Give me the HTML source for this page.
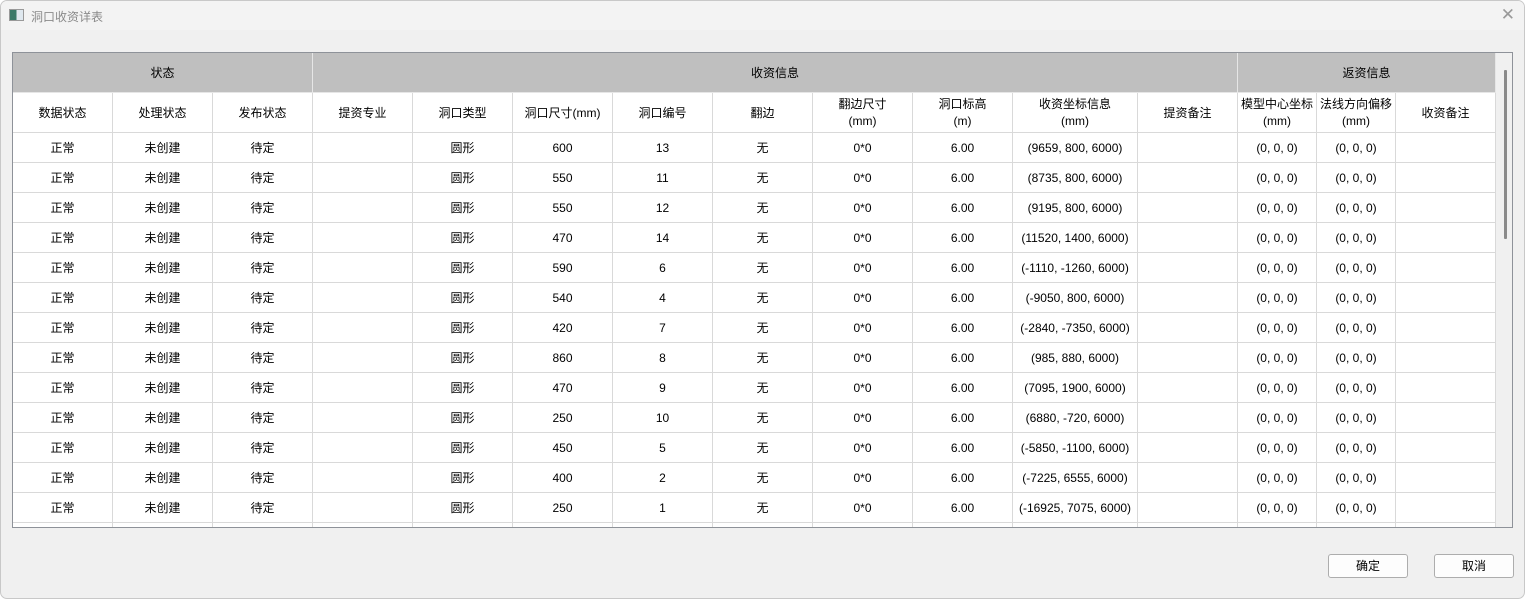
<!DOCTYPE html>
<html><head><meta charset="utf-8"><style>
*{margin:0;padding:0;box-sizing:border-box}
body{width:1526px;height:600px;background:#fff;font-family:"Liberation Sans","Noto Sans CJK SC",sans-serif;font-size:12px;color:#000;overflow:hidden;position:relative}
.win{position:absolute;left:0;top:0;width:1525px;height:599px;background:#f0f0f0;border:1px solid #c8c8c8;border-radius:7px;overflow:hidden}
.title{position:absolute;left:0;top:0;width:100%;height:29px;background:#f3f3f3}
.title span{position:absolute;left:30px;top:7px;color:#8a8a8a;font-size:12px}
.ico{position:absolute;left:8px;top:8px;width:15px;height:12px;border:1px solid #999;background:linear-gradient(90deg,#3a7a6a 0 50%,#dfe8ef 50%)}
.close{position:absolute;right:9px;top:4px;color:#999;font-size:17px}
.frame{position:absolute;left:11px;top:51px;width:1501px;height:476px;border:1px solid #8e9299;background:#fff;overflow:hidden}
table{border-collapse:collapse;table-layout:fixed;position:absolute;left:-1px;top:-1px}
td{border:1px solid #d9d9d9;text-align:center;height:30px;line-height:17px;padding:1px 0 0;white-space:nowrap;overflow:hidden}
tr.g td{background:#bfbfbf;height:40px;border-color:#e6e6e6}
tr.h td{height:40px}
.sb{position:absolute;left:1483px;top:0;width:17px;height:476px;background:#f0f0f0}
.th{position:absolute;left:8px;top:17px;width:3px;height:169px;background:#8a8a8a;border-radius:1px}
.btn{position:absolute;top:553px;width:80px;height:24px;border:1px solid #adadad;border-radius:3px;background:#fdfdfd;text-align:center;line-height:22px;font-size:12px}
</style></head><body><div class="win">
<div class="title"><div class="ico"></div><span>洞口收资详表</span><div class="close">✕</div></div>
<div class="frame">
<table>
<colgroup><col style="width:100px"><col style="width:100px"><col style="width:100px"><col style="width:100px"><col style="width:100px"><col style="width:100px"><col style="width:100px"><col style="width:100px"><col style="width:100px"><col style="width:100px"><col style="width:125px"><col style="width:100px"><col style="width:79px"><col style="width:79px"><col style="width:100px"></colgroup>
<tr class="g"><td colspan="3">状态</td><td colspan="9">收资信息</td><td colspan="3">返资信息</td></tr>
<tr class="h"><td>数据状态</td><td>处理状态</td><td>发布状态</td><td>提资专业</td><td>洞口类型</td><td>洞口尺寸(mm)</td><td>洞口编号</td><td>翻边</td><td>翻边尺寸<br>(mm)</td><td>洞口标高<br>(m)</td><td>收资坐标信息<br>(mm)</td><td>提资备注</td><td>模型中心坐标<br>(mm)</td><td>法线方向偏移<br>(mm)</td><td>收资备注</td></tr>
<tr><td>正常</td><td>未创建</td><td>待定</td><td></td><td>圆形</td><td>600</td><td>13</td><td>无</td><td>0*0</td><td>6.00</td><td>(9659, 800, 6000)</td><td></td><td>(0, 0, 0)</td><td>(0, 0, 0)</td><td></td></tr>
<tr><td>正常</td><td>未创建</td><td>待定</td><td></td><td>圆形</td><td>550</td><td>11</td><td>无</td><td>0*0</td><td>6.00</td><td>(8735, 800, 6000)</td><td></td><td>(0, 0, 0)</td><td>(0, 0, 0)</td><td></td></tr>
<tr><td>正常</td><td>未创建</td><td>待定</td><td></td><td>圆形</td><td>550</td><td>12</td><td>无</td><td>0*0</td><td>6.00</td><td>(9195, 800, 6000)</td><td></td><td>(0, 0, 0)</td><td>(0, 0, 0)</td><td></td></tr>
<tr><td>正常</td><td>未创建</td><td>待定</td><td></td><td>圆形</td><td>470</td><td>14</td><td>无</td><td>0*0</td><td>6.00</td><td>(11520, 1400, 6000)</td><td></td><td>(0, 0, 0)</td><td>(0, 0, 0)</td><td></td></tr>
<tr><td>正常</td><td>未创建</td><td>待定</td><td></td><td>圆形</td><td>590</td><td>6</td><td>无</td><td>0*0</td><td>6.00</td><td>(-1110, -1260, 6000)</td><td></td><td>(0, 0, 0)</td><td>(0, 0, 0)</td><td></td></tr>
<tr><td>正常</td><td>未创建</td><td>待定</td><td></td><td>圆形</td><td>540</td><td>4</td><td>无</td><td>0*0</td><td>6.00</td><td>(-9050, 800, 6000)</td><td></td><td>(0, 0, 0)</td><td>(0, 0, 0)</td><td></td></tr>
<tr><td>正常</td><td>未创建</td><td>待定</td><td></td><td>圆形</td><td>420</td><td>7</td><td>无</td><td>0*0</td><td>6.00</td><td>(-2840, -7350, 6000)</td><td></td><td>(0, 0, 0)</td><td>(0, 0, 0)</td><td></td></tr>
<tr><td>正常</td><td>未创建</td><td>待定</td><td></td><td>圆形</td><td>860</td><td>8</td><td>无</td><td>0*0</td><td>6.00</td><td>(985, 880, 6000)</td><td></td><td>(0, 0, 0)</td><td>(0, 0, 0)</td><td></td></tr>
<tr><td>正常</td><td>未创建</td><td>待定</td><td></td><td>圆形</td><td>470</td><td>9</td><td>无</td><td>0*0</td><td>6.00</td><td>(7095, 1900, 6000)</td><td></td><td>(0, 0, 0)</td><td>(0, 0, 0)</td><td></td></tr>
<tr><td>正常</td><td>未创建</td><td>待定</td><td></td><td>圆形</td><td>250</td><td>10</td><td>无</td><td>0*0</td><td>6.00</td><td>(6880, -720, 6000)</td><td></td><td>(0, 0, 0)</td><td>(0, 0, 0)</td><td></td></tr>
<tr><td>正常</td><td>未创建</td><td>待定</td><td></td><td>圆形</td><td>450</td><td>5</td><td>无</td><td>0*0</td><td>6.00</td><td>(-5850, -1100, 6000)</td><td></td><td>(0, 0, 0)</td><td>(0, 0, 0)</td><td></td></tr>
<tr><td>正常</td><td>未创建</td><td>待定</td><td></td><td>圆形</td><td>400</td><td>2</td><td>无</td><td>0*0</td><td>6.00</td><td>(-7225, 6555, 6000)</td><td></td><td>(0, 0, 0)</td><td>(0, 0, 0)</td><td></td></tr>
<tr><td>正常</td><td>未创建</td><td>待定</td><td></td><td>圆形</td><td>250</td><td>1</td><td>无</td><td>0*0</td><td>6.00</td><td>(-16925, 7075, 6000)</td><td></td><td>(0, 0, 0)</td><td>(0, 0, 0)</td><td></td></tr>
<tr><td>&nbsp;</td><td></td><td></td><td></td><td></td><td></td><td></td><td></td><td></td><td></td><td></td><td></td><td></td><td></td><td></td></tr>
</table>
<div class="sb"><div class="th"></div></div>
</div>
<div class="btn" style="left:1327px">确定</div>
<div class="btn" style="left:1433px">取消</div>
</div></body></html>
